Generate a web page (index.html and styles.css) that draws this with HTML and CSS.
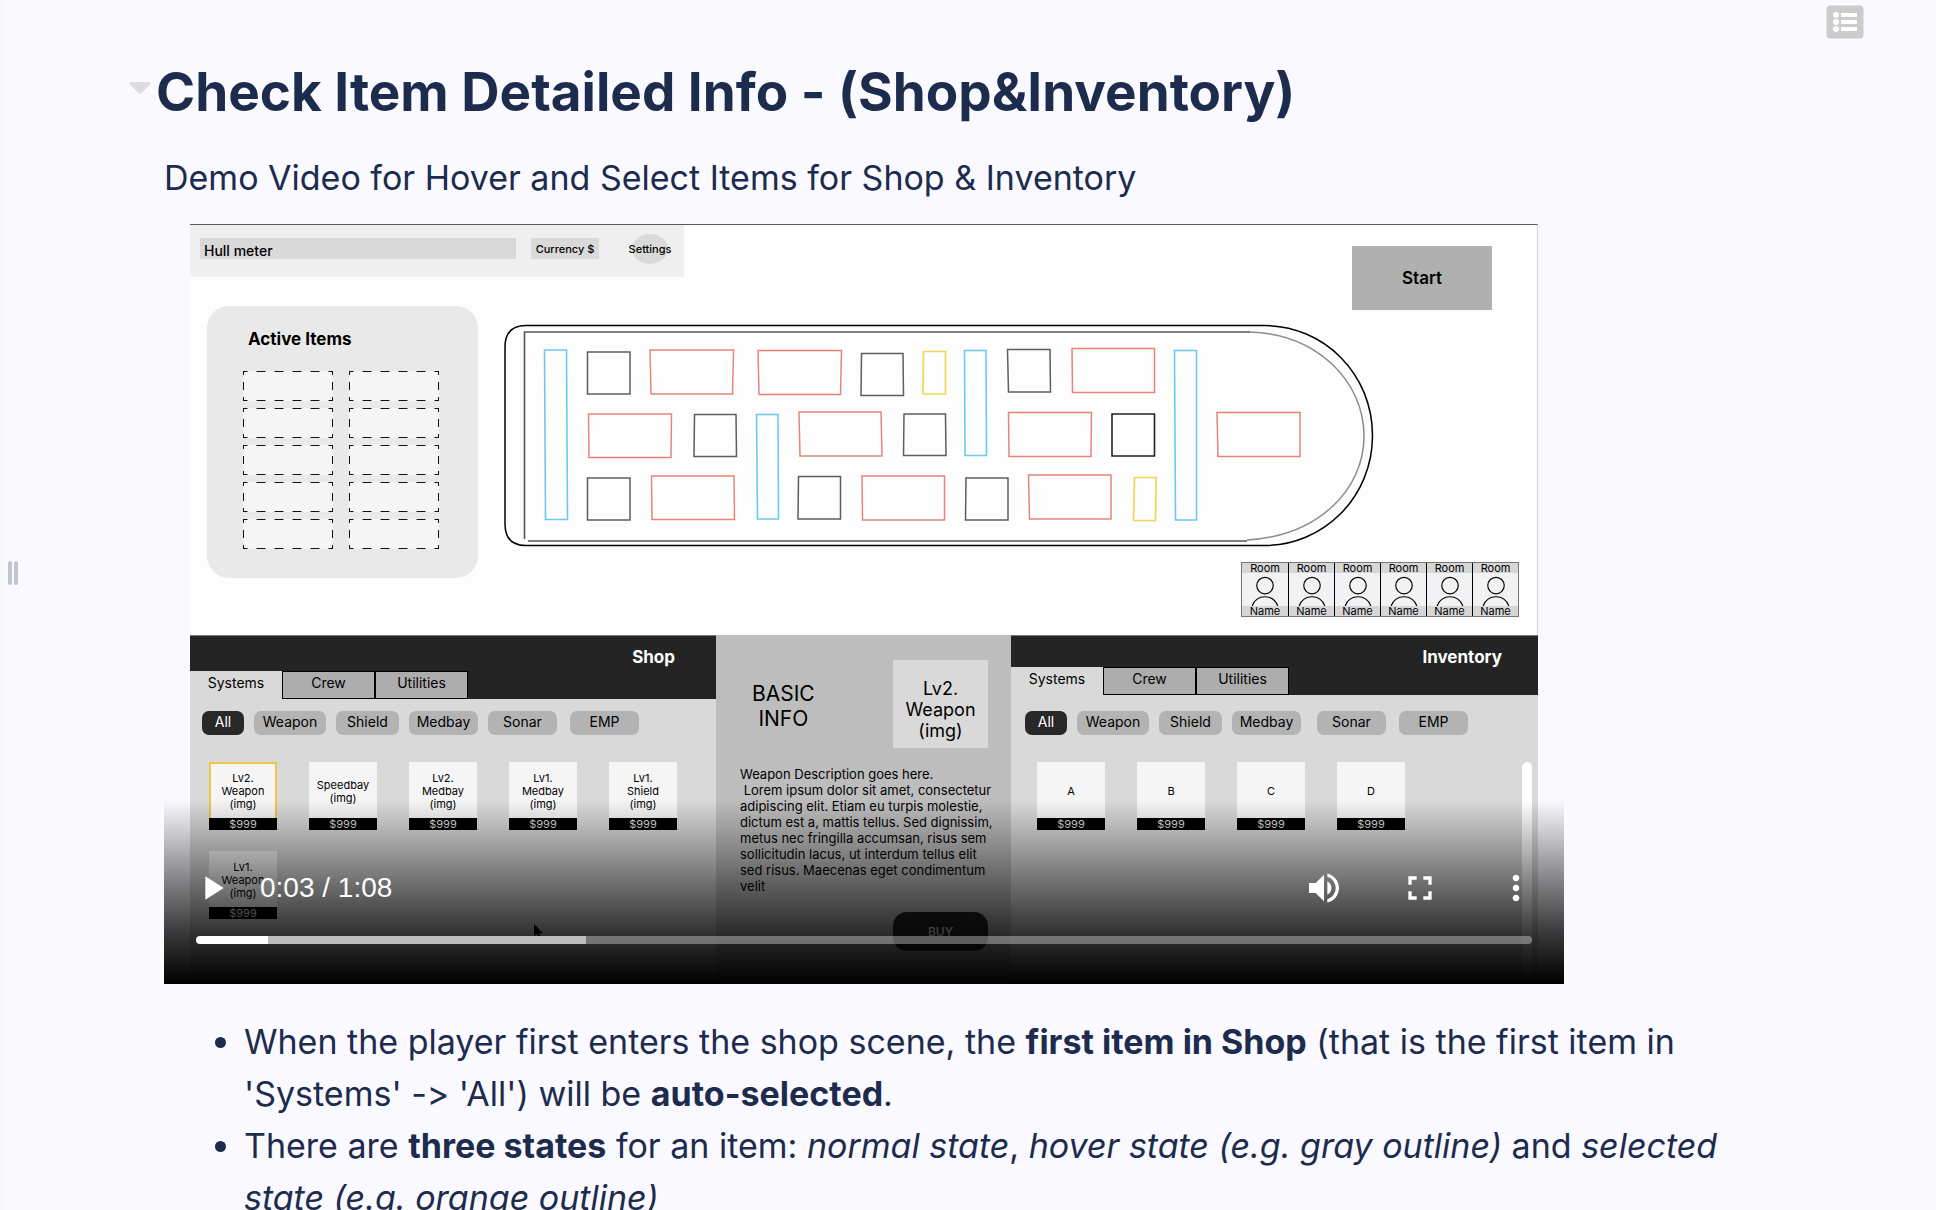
FILE: index.html
```html
<!DOCTYPE html>
<html lang="en">
<head>
<meta charset="utf-8">
<title>Check Item Detailed Info</title>
<link rel="stylesheet" href="styles.css">
</head>
<body>
<svg class="defs" aria-hidden="true">
  <symbol id="slot" viewBox="0 0 90 30">
    <rect width="90" height="30" fill="#f5f5f5"/>
    <path d="M0 .5H90M0 29.5H90" stroke="#111" stroke-dasharray="9 9" stroke-dashoffset="4.5"/>
    <path d="M.5 0V30M89.5 0V30" stroke="#111" stroke-dasharray="8 7" stroke-dashoffset="4"/>
  </symbol>
  <symbol id="person" viewBox="0 0 28 34">
    <circle cx="14" cy="13" r="8.5" fill="none" stroke="#000" stroke-width="1.2"/>
    <path d="M.8 34C3 28 8 24.500 14 24.500S25 28 27.200 34" fill="none" stroke="#000" stroke-width="1.200"/>
  </symbol>
</svg>

<div class="page">
  <div class="splitter" aria-hidden="true"><span></span><span></span></div>
  <main class="doc">
    <button class="outline-btn" aria-label="Outline">
      <svg viewBox="0 0 38 34" width="38" height="34"><rect x=".5" y=".5" width="37" height="33" rx="4" fill="#ccc"/><g fill="#fff"><circle cx="10" cy="10" r="3"/><circle cx="10" cy="17" r="3"/><circle cx="10" cy="24" r="3"/><rect x="15" y="8" width="16" height="4"/><rect x="15" y="15" width="16" height="4"/><rect x="15" y="22" width="16" height="4"/></g></svg>
    </button>
    <div class="title-row">
      <button class="fold" aria-label="Collapse section"><svg viewBox="0 0 22 12" width="22" height="12"><path d="M1.500 0H20.500Q22.500 .6 21 2.500L12.500 11Q11 12.600 9.500 11L1 2.500Q-.5 .6 1.500 0Z" fill="#ddd"/></svg></button>
      <h1>Check Item Detailed Info - (Shop&amp;Inventory)</h1>
    </div>
    <p class="lead">Demo Video for Hover and Select Items for Shop &amp; Inventory</p>

    <div class="player">
      <div class="frame">
        <section class="stage">
          <div class="stage-top">
            <div class="status">
              <span class="hull">Hull meter</span>
              <span class="currency">Currency $</span>
              <span class="settings">Settings</span>
            </div>
            <button class="start">Start</button>
          </div>
          <div class="stage-body">
            <div class="active">
              <h2>Active Items</h2>
              <div class="slots">
                <svg><use href="#slot"/></svg><svg><use href="#slot"/></svg>
                <svg><use href="#slot"/></svg><svg><use href="#slot"/></svg>
                <svg><use href="#slot"/></svg><svg><use href="#slot"/></svg>
                <svg><use href="#slot"/></svg><svg><use href="#slot"/></svg>
                <svg><use href="#slot"/></svg><svg><use href="#slot"/></svg>
              </div>
            </div>
            <div class="ship-col">
              <svg class="ship" viewBox="500 320 880 230" width="880" height="230" fill="none">
                <path d="M526 325.500H1264C1324 325.500 1372.500 374 1372.500 435.500S1324 545.500 1264 545.500H526Q505 545.500 505 524V347Q505 325.500 526 325.500Z" stroke="#000" stroke-width="1.500"/>
                <path d="M524.500 539V332H1250M528 541H1247" stroke="#555" stroke-width="1.600"/>
                <path d="M1250 332C1318 334 1364 382 1364 436S1318 536 1247 540" stroke="#8c8c8c" stroke-width="1.500"/>
                <g stroke="#6cc9ef" stroke-width="1.600">
                  <path d="M544.500 350H566.500L567.500 519.500H545.500ZM964.500 350.500H986L986.500 455.500H965ZM1174.500 350.500H1196.500V520H1175.500ZM756.500 414.500H778L778.500 519H757.500Z"/>
                </g>
                <g stroke="#e58578" stroke-width="1.500">
                  <path d="M650 350H733.500L732.500 394H651ZM758 350.500H841.500L840.500 394.500H759ZM1072 348.500H1154.500V392.500H1072.500ZM588.500 414H671.500L671 457.500H589ZM799 412H881L882 456H800ZM1008.500 412.500H1091.500L1091 456.500H1009ZM1217 412.500H1300V456.500H1218ZM651.500 476H734L734.500 519.500H652ZM862 476H944.500V520H862.500ZM1028.500 475H1111V519H1029.500Z"/>
                </g>
                <g stroke="#625c5e" stroke-width="1.500">
                  <path d="M587.500 352H630V394H587.500ZM861.500 353.500H903L903.500 395.500H861ZM1007.500 349.500H1050L1050.500 392H1008.500ZM694.500 414.500H736L736.500 456.500H694ZM904 414H945.500L946 455.500H903.500ZM587.500 478H630V520H587.500ZM798.500 476.500H840.500V519H798ZM966 478H1008V520H965.500Z"/>
                </g>
                <path d="M1112 414H1154.500V456H1112Z" stroke="#222" stroke-width="1.600"/>
                <path d="M923.500 351.500H945.500V394H923ZM1134.500 477.500H1156L1155.500 520.500H1133.500Z" stroke="#f0d45c" stroke-width="1.700"/>
              </svg>
              <div class="crew">
                <div><b>Room</b><svg><use href="#person"/></svg><b>Name</b></div>
                <div><b>Room</b><svg><use href="#person"/></svg><b>Name</b></div>
                <div><b>Room</b><svg><use href="#person"/></svg><b>Name</b></div>
                <div><b>Room</b><svg><use href="#person"/></svg><b>Name</b></div>
                <div><b>Room</b><svg><use href="#person"/></svg><b>Name</b></div>
                <div><b>Room</b><svg><use href="#person"/></svg><b>Name</b></div>
              </div>
            </div>
          </div>
        </section>

        <div class="panels">
          <section class="panel shop">
            <header>
              <h2>Shop</h2>
              <nav><button class="on">Systems</button><button>Crew</button><button>Utilities</button></nav>
            </header>
            <div class="chips"><button class="w-s on">All</button><button class="w-l">Weapon</button><button class="w-m">Shield</button><button class="w-l2">Medbay</button><button class="w-l2">Sonar</button><button class="w-l2 apart">EMP</button></div>
            <div class="tiles">
              <div class="tile selected"><p>Lv2.<br>Weapon<br>(img)</p><span>$999</span></div>
              <div class="tile"><p>Speedbay<br>(img)</p><span>$999</span></div>
              <div class="tile"><p>Lv2.<br>Medbay<br>(img)</p><span>$999</span></div>
              <div class="tile"><p>Lv1.<br>Medbay<br>(img)</p><span>$999</span></div>
              <div class="tile"><p>Lv1.<br>Shield<br>(img)</p><span>$999</span></div>
              <div class="tile"><p>Lv1.<br>Weapon<br>(img)</p><span>$999</span></div>
            </div>
          </section>

          <section class="info">
            <div class="info-top">
              <h2>BASIC<br>INFO</h2>
              <div class="preview">Lv2.<br>Weapon<br>(img)</div>
            </div>
            <p class="desc">Weapon Description goes here.<br>&nbsp;Lorem ipsum dolor sit amet, consectetur<br>adipiscing elit. Etiam eu turpis molestie,<br>dictum est a, mattis tellus. Sed dignissim,<br>metus nec fringilla accumsan, risus sem<br>sollicitudin lacus, ut interdum tellus elit<br>sed risus. Maecenas eget condimentum<br>velit</p>
            <button class="buy">BUY</button>
          </section>

          <section class="panel inventory">
            <header>
              <h2>Inventory</h2>
              <nav><button class="on">Systems</button><button>Crew</button><button>Utilities</button></nav>
            </header>
            <div class="chips"><button class="w-s on">All</button><button class="w-l">Weapon</button><button class="w-m">Shield</button><button class="w-l2">Medbay</button><button class="w-l2 far">Sonar</button><button class="w-l2 apart">EMP</button></div>
            <div class="inv-body">
              <div class="tiles">
                <div class="tile"><p>A</p><span>$999</span></div>
                <div class="tile"><p>B</p><span>$999</span></div>
                <div class="tile"><p>C</p><span>$999</span></div>
                <div class="tile"><p>D</p><span>$999</span></div>
              </div>
              <div class="scrollbar"></div>
            </div>
          </section>
        </div>
        <svg class="cursor" viewBox="0 0 10 16" width="10" height="16"><path d="M0 0V12.500L2.800 10L5 15L7 14L5 9.300H9Z" fill="#000"/></svg>
      </div>

      <div class="controls">
        <div class="buttons">
          <button aria-label="Play"><svg viewBox="0 0 24 24"><path d="M8 5v14l11-7z"/></svg></button>
          <span class="time">0:03 / 1:08</span>
          <button aria-label="Mute"><svg viewBox="0 0 24 24"><path d="M3 9v6h4l5 5V4L7 9H3zm13.500 3c0-1.770-1.020-3.290-2.500-4.030v8.050c1.480-.73 2.500-2.250 2.500-4.020zM14 3.230v2.060c2.890.86 5 3.540 5 6.710s-2.110 5.850-5 6.710v2.060c4.010-.91 7-4.490 7-8.770s-2.990-7.860-7-8.770z"/></svg></button>
          <button aria-label="Full screen"><svg viewBox="0 0 24 24"><path d="M7 14H5v5h5v-2H7v-3zm-2-4h2V7h3V5H5v5zm12 7h-3v2h5v-5h-2v3zM14 5v2h3v3h2V5h-5z"/></svg></button>
          <button aria-label="More options"><svg viewBox="0 0 24 24"><path d="M12 8c1.100 0 2-.9 2-2s-.9-2-2-2-2 .9-2 2 .9 2 2 2zm0 2c-1.100 0-2 .9-2 2s.9 2 2 2 2-.9 2-2-.9-2-2-2zm0 6c-1.100 0-2 .9-2 2s.9 2 2 2 2-.9 2-2-.9-2-2-2z"/></svg></button>
        </div>
        <input class="seek" type="range" min="0" max="68" value="3" aria-label="Seek">
      </div>
    </div>

    <ul class="notes">
      <li>When the player first enters the shop scene, the <strong>first item in Shop</strong> (that is the first item in<br>'Systems' -&gt; 'All') will be <strong>auto-selected</strong>.</li>
      <li>There are <strong>three states</strong> for an item: <em>normal state</em>, <em>hover state (e.g. gray outline)</em> and <em>selected<br>state (e.g. orange outline)</em></li>
    </ul>
  </main>
</div>
</body>
</html>
```
FILE: styles.css
```css
* { box-sizing: border-box; }
body {
  margin: 0;
  height: 100vh;
  overflow: hidden;
  background: #f9f9ff;
  color: #1d2b4d;
  font-family: Inter, "Liberation Sans", sans-serif;
  font-feature-settings: "calt" 0;
}
h1, h2, p, ul { margin: 0; padding: 0; }
button { border: 0; padding: 0; background: none; color: inherit; font: inherit; }
svg { display: block; }
.defs { position: absolute; width: 0; height: 0; }

.page { display: flex; height: 100vh; overflow: hidden; }
.splitter {
  display: flex;
  flex: none;
  gap: 2px;
  align-items: center;
  width: 20px;
  padding: 0 0 64px 4px;
  border-left: 4px solid #f5f6f8;
}
.splitter span { width: 4px; height: 24px; border-radius: 2px; background: #c0c5ce; }

.doc { flex: 1; min-width: 0; padding: 0 72px 0 144px; position: relative; }
.outline-btn { position: absolute; top: 5px; right: 72px; }

.title-row { display: flex; align-items: flex-start; gap: 5px; margin-left: -35px; padding-top: 60px; }
.fold { margin-top: 22px; }
h1 { font-size: 53px; line-height: 64px; font-weight: 700; white-space: nowrap; }
.lead { margin-top: 28px; font-size: 34px; line-height: 52px; white-space: nowrap; }

/* video player */
.player {
  position: relative;
  max-width: 1400px;
  margin-top: 20px;
  height: 760px;
  overflow: hidden;
  color: #000;
}
.frame { position: relative; max-width: 1348px; height: 760px; margin: 0 auto; background: #fdfdfd; }
.stage { height: 411px; border-top: 1px solid #5a585c; border-right: 1px solid #d5d5da; }
.stage-top { display: flex; justify-content: space-between; align-items: flex-start; height: 81px; }
.status { display: flex; width: 494px; height: 52px; padding: 13px 10px; background: #efefef; }
.status span { height: 21px; background: #d9d9d9; font-weight: 500; }
.hull { width: 316px; padding-left: 4px; font-size: 14px; line-height: 25px; }
.status .currency { width: 68px; margin-left: 15px; font-size: 11px; line-height: 22px; text-align: center; }
.status .settings {
  display: flex;
  justify-content: center;
  width: 36px;
  height: 30px;
  margin: -4px 0 0 33px;
  border-radius: 50%;
  font-size: 11px;
  line-height: 30px;
}
.start { width: 140px; height: 64px; margin: 21px 45px 0 0; background: #b0b0b0; font-size: 17px; font-weight: 600; }
.stage-body { display: flex; }
.active { width: 271px; height: 272px; margin-left: 17px; padding: 21px 36px; border-radius: 22px; background: #e9e9e9; }
.active h2 { padding-left: 5px; font-size: 17px; line-height: 24px; font-weight: 700; }
.slots { display: grid; grid-template-columns: 90px 90px; gap: 7px 16px; margin-top: 20px; }
.slots svg { width: 90px; height: 30px; }
.ship-col { flex: 1; min-width: 0; display: flex; flex-direction: column; gap: 12px; margin: 14px 18px 0 22px; }
.ship { flex: none; }
.crew { display: flex; align-self: flex-end; border: 1px solid #777; }
.crew div { width: 46px; height: 53px; background: #f2f2f4; }
.crew div + div { border-left: 1px solid #000; }
.crew b { display: block; height: 10px; background: #d6d6d6; font-size: 11px; line-height: 11px; font-weight: 400; text-align: center; }
.crew svg { width: 28px; height: 33px; margin: 0 auto; }

.panels { display: grid; grid-template-columns: 526fr 295fr 527fr; height: 349px; }
.panel { min-width: 0; background: #d9d9d9; }
.panel header { display: flex; flex-direction: column; justify-content: space-between; height: 64px; background: #242424; border-top: 1px solid #777; }
.panel h2 { padding: 9px 41px 0 0; color: #fff; font-size: 17px; line-height: 24px; font-weight: 700; text-align: right; }
.inventory h2 { padding-right: 36px; }
.inventory header { height: 60px; }
.panel nav { display: flex; margin-top: -6px; }
.panel nav button { width: 93px; height: 28px; padding-bottom: 5px; background: #adadad; border: 1px solid #000; font-size: 14px; }
.panel nav .on { width: 92px; background: #d9d9d9; border: 0; }
.chips { display: flex; gap: 10px; margin: 12px 0 0 12px; }
.chips button { height: 24px; padding-bottom: 3px; border-radius: 7px; background: #b3b3b3; font-size: 14px; }
.chips .on { background: #282828; color: #fff; }
.chips .w-s { width: 42px; }
.chips .w-l { width: 72px; }
.chips .w-m { width: 63px; }
.chips .w-l2 { width: 69px; }
.chips .apart { margin-left: 3px; }
.chips .far { margin-left: 6px; }
.inventory .chips { margin: 16px 0 0 14px; }
.tiles { display: grid; grid-template-columns: repeat(5, 68px); gap: 21px 32px; margin: 27px 0 0 19px; }
.tile { font-size: 11px; line-height: 13px; text-align: center; }
.tile p { display: flex; align-items: center; justify-content: center; height: 56px; padding-top: 3px; background: #f5f5f5; }
.tile span { display: block; height: 12px; background: #000; color: #ddd; line-height: 12px; }
.tile.selected p { padding-top: 1px; border: 2px solid #eec643; border-bottom: 0; }
.inv-body { display: flex; justify-content: space-between; margin-top: 27px; padding-right: 6px; }
.inv-body .tiles { grid-template-columns: repeat(4, 68px); margin: 0 0 0 26px; }
.scrollbar { width: 10px; height: 230px; border-radius: 5px; background: #fff; }

.info { display: flex; flex-direction: column; min-width: 0; padding: 25px 23px 0 24px; background: #bdbdbd; }
.info-top { display: flex; justify-content: space-between; align-items: flex-start; padding-left: 12px; }
.info h2 { padding-top: 21px; font-size: 21px; line-height: 25px; font-weight: 400; text-align: center; }
.preview { width: 95px; height: 88px; padding-top: 18px; background: #d9d9d9; font-size: 18px; line-height: 21px; text-align: center; }
.desc { margin-top: 18px; font-size: 13px; line-height: 16px; white-space: nowrap; }
.buy { align-self: flex-end; width: 95px; height: 39px; margin-top: 18px; border-radius: 14px; background: #242424; color: #fff; font-size: 12px; font-weight: 500; }
.cursor { position: absolute; left: 344px; top: 700px; }

.controls {
  position: absolute;
  inset: auto 0 0 0;
  height: 184px;
  padding-top: 40px;
  background: linear-gradient(rgba(0,0,0,0), rgba(0,0,0,.3) 28%, rgba(0,0,0,.51) 47%, rgba(0,0,0,.79) 74%, #000);
}
.buttons { display: flex; align-items: center; height: 96px; color: #fff; }
.buttons button { display: flex; justify-content: center; width: 96px; }
.buttons svg { width: 40px; height: 40px; fill: #fff; }
.time { flex: 1; font: 28px/40px "Liberation Sans", Arial, sans-serif; }
.seek {
  appearance: none;
  display: block;
  width: calc(100% - 64px);
  height: 8px;
  margin: 0 32px;
  border-radius: 4px;
  background:
    linear-gradient(#fff, #fff) 0 0 / 72px 8px no-repeat,
    linear-gradient(#bcbcbc, #bcbcbc) 0 0 / 390px 8px no-repeat,
    rgba(255,255,255,.35);
}
.seek::-webkit-slider-thumb { appearance: none; width: 8px; height: 8px; background: transparent; }

.notes { margin-top: 32px; padding-left: 80px; font-size: 34px; line-height: 52px; white-space: nowrap; }
strong { font-weight: 700; }
```
